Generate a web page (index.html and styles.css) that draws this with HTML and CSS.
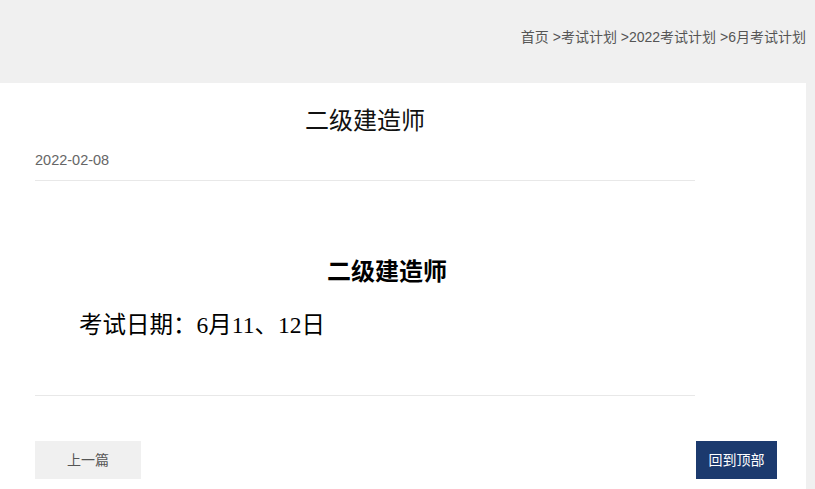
FILE: index.html
```html
<!DOCTYPE html>
<html lang="zh-CN">
  <head>
    <meta charset="UTF-8" />
    <meta name="viewport" content="width=device-width, initial-scale=1.0" />
    <title>二级建造师</title>
    <link rel="stylesheet" href="styles.css">
  </head>
  <body>
    <header class="top">
      <div class="crumbs">
        <a href="#">首页</a> &gt;<a href="#">考试计划</a> &gt;<a href="#">2022考试计划</a> &gt;<a href="#">6月考试计划</a>
      </div>
    </header>
    <main class="panel">
      <div class="article">
        <h1 class="art-title">二级建造师</h1>
        <div class="art-date">2022-02-08</div>
        <div class="art-body">
          <h2 class="body-head">二级建造师</h2>
          <p class="body-text">考试日期：6月11、12日</p>
        </div>
        <div class="art-nav">
          <a href="#" class="btn-prev">上一篇</a>
          <a href="#" class="btn-top">回到顶部</a>
        </div>
      </div>
    </main>
  </body>
</html>
```

FILE: styles.css
```css
body {
  margin: 0;
  padding: 0;
  background: #f0f0f0;
  font-family: "Liberation Sans", "Noto Sans CJK SC", sans-serif;
  color: #333;
}
a {
  color: inherit;
  text-decoration: none;
}
.top {
  height: 83px;
  box-sizing: border-box;
  padding: 26px 9px 0 0;
}
.crumbs {
  text-align: right;
  font-size: 14px;
  line-height: 22px;
  color: #555;
}
.panel {
  width: 806px;
  background: #fff;
  padding: 20px 0 10px;
  min-height: 386px;
  box-sizing: border-box;
}
.article {
  width: 660px;
  margin-left: 35px;
}
.art-title {
  margin: 0;
  text-align: center;
  font-size: 24px;
  font-weight: normal;
  line-height: 36px;
  color: #111;
}
.art-date {
  margin-top: 11px;
  padding-bottom: 10px;
  font-size: 14.5px;
  line-height: 20px;
  color: #666;
  border-bottom: 1px solid #e8e8e8;
}
.art-body {
  padding: 76px 0 54px;
  border-bottom: 1px solid #e8e8e8;
  font-family: "Liberation Serif", "Noto Sans CJK SC", serif;
  color: #000;
}
.body-head {
  margin: 0;
  text-align: center;
  text-indent: 44px;
  font-size: 24px;
  line-height: 30px;
}
.body-text {
  margin: 22px 0 0;
  text-indent: 44px;
  font-size: 23.5px;
  line-height: 32px;
}
.art-nav {
  display: flex;
  justify-content: space-between;
  align-items: center;
  margin-top: 45px;
  margin-right: -82px;
}
.btn-prev,
.btn-top {
  display: block;
  height: 38px;
  line-height: 38px;
  font-size: 14px;
  text-align: center;
}
.btn-prev {
  width: 106px;
  background: #f0f0f0;
  color: #555;
}
.btn-top {
  width: 81px;
  background: #1c3a6e;
  color: #fff;
}
```
